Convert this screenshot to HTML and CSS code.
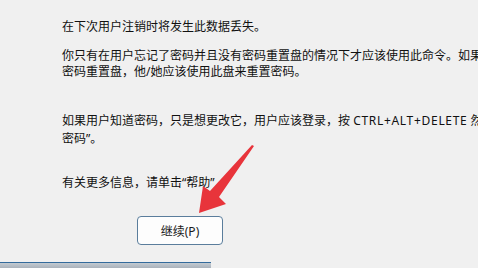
FILE: index.html
```html
<!DOCTYPE html>
<html lang="zh-CN">
<head>
    <meta charset="UTF-8">
    <meta name="viewport" content="width=device-width, initial-scale=1.0">
    <title>重置密码</title>
    <link rel="stylesheet" href="styles.css">
</head>
<body>
    <div class="dialog">
        <div class="message">
            <p class="msg-line first">在下次用户注销时将发生此数据丢失。</p>
            <p class="msg-line second">你只有在用户忘记了密码并且没有密码重置盘的情况下才应该使用此命令。如果用户有<br>密码重置盘，他/她应该使用此盘来重置密码。</p>
            <p class="msg-line third">如果用户知道密码，只是想更改它，用户应该登录，按 <span class="keys">CTRL+ALT+DELETE</span> 然后单击“更改<br>密码”。</p>
            <p class="msg-line fourth">有关更多信息，请单击“帮助”</p>
        </div>
        <div class="actions">
            <button type="button" class="continue-btn">继续(P)</button>
        </div>
    </div>
    <div class="below-window"></div>

    <!-- annotation arrow -->
    <svg class="arrow" width="478" height="268" viewBox="0 0 478 268" aria-hidden="true">
        <polygon points="254,146 219,197 226,204 199,213 203,186 210,191 252,145" fill="#e8343b"/>
    </svg>
</body>
</html>
```

FILE: styles.css
```css
body {
    margin: 0;
    background-color: #f0f0f0;
    font-family: "Noto Sans", "Noto Sans CJK SC", sans-serif;
    font-size: 12px;
    color: #111;
    width: 478px;
    height: 268px;
    overflow: hidden;
    position: relative;
}

.dialog {
    height: 262px;
    display: flex;
    flex-direction: column;
}

.message {
    padding-left: 62px;
    white-space: nowrap;
    overflow: hidden;
}

.msg-line {
    margin: 0;
    line-height: 16px;
}

.first {
    margin-top: 19px;
}

.second {
    margin-top: 13px;
}

.third {
    margin-top: 32px;
    line-height: 18px;
}

/* Segoe UI is a bit wider than Noto Sans */
.keys {
    letter-spacing: 0.7px;
}

.fourth {
    margin-top: 27px;
}

.actions {
    padding-left: 137px;
    margin-top: 25px;
}

.continue-btn {
    width: 86px;
    height: 29px;
    padding: 0;
    background-color: #fdfdfd;
    border: 1px solid #5a7d9c;
    border-radius: 4px;
    font-family: inherit;
    font-size: 12px;
    color: #1a1a1a;
}

.below-window {
    width: 211px;
    height: 5px;
    border-top: 1px solid #336b9c;
    background: linear-gradient(#c3cad1, #aab3bc);
}

.arrow {
    position: absolute;
    left: 0;
    top: 0;
}
```
